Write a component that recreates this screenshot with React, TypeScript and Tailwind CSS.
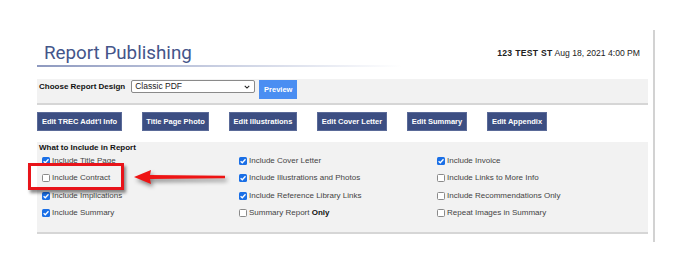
import type { ReactNode } from 'react'

type Option = { label: ReactNode; checked: boolean }

const columns: Option[][] = [
  [
    { label: 'Include Title Page', checked: true },
    { label: 'Include Contract', checked: false },
    { label: 'Include Implications', checked: true },
    { label: 'Include Summary', checked: true },
  ],
  [
    { label: 'Include Cover Letter', checked: true },
    { label: 'Include Illustrations and Photos', checked: true },
    { label: 'Include Reference Library Links', checked: true },
    {
      label: (
        <>
          Summary Report <span className="font-bold text-[#111]">Only</span>
        </>
      ),
      checked: false,
    },
  ],
  [
    { label: 'Include Invoice', checked: true },
    { label: 'Include Links to More Info', checked: false },
    { label: 'Include Recommendations Only', checked: false },
    { label: 'Repeat Images in Summary', checked: false },
  ],
]

const editButtons = [
  { label: "Edit TREC Addt'l Info", width: 'w-[85px]' },
  { label: 'Title Page Photo', width: 'w-[67px]' },
  { label: 'Edit Illustrations', width: 'w-[68px]' },
  { label: 'Edit Cover Letter', width: 'w-[70px]' },
  { label: 'Edit Summary', width: 'w-[60px]' },
  { label: 'Edit Appendix', width: 'w-[60px]' },
]

function Checkbox({ checked }: { checked: boolean }) {
  if (checked) {
    return (
      <span className="flex h-[8px] w-[8px] shrink-0 items-center justify-center rounded-[1.5px] bg-[#1a6fe6]">
        <svg viewBox="0 0 8 8" className="h-[8px] w-[8px]">
          <path d="M1.6 4.2 L3.3 5.8 L6.5 2.2" fill="none" stroke="#fff" strokeWidth="1.3" />
        </svg>
      </span>
    )
  }
  return <span className="h-[8px] w-[8px] shrink-0 rounded-[1.5px] border border-[#8a8a8a] bg-white" />
}

export default function App() {
  return (
    <div className="relative h-[271px] w-[685px] overflow-hidden bg-white font-['Liberation_Sans',Arial,sans-serif] text-[#333]">
      <div className="ml-[37px] mt-[30px] w-[618px] border-r-2 border-[#d2d2d2] pb-[8px] pr-[5px]">
        {/* Header */}
        <div className="flex items-start justify-between pt-[11px]">
          <div>
            <h1 className="pl-[7px] font-['Roboto',sans-serif] text-[18.8px] leading-[24px] text-[#44558a]">
              Report Publishing
            </h1>
            <div className="h-[2px] w-[365px] bg-gradient-to-r from-[#8e99bf] via-[#c9cfe2] to-white" />
          </div>
          <div className="pr-[8px] pt-[6px] text-[8.6px] leading-[12px] text-[#222]">
            <span className="font-bold tracking-[0.3px]">123 TEST ST</span> Aug 18, 2021 4:00 PM
          </div>
        </div>

        {/* Design chooser */}
        <div className="mt-[12px] flex h-[26px] items-start border-b-2 border-[#d6d6d6] bg-[#f2f2f2] pl-[2px] pt-[1px]">
          <span className="mt-[1px] text-[8px] font-bold leading-[12px] text-[#111]">Choose Report Design</span>
          <div className="ml-[6px] flex h-[13px] w-[124px] items-center justify-between rounded-[2px] border border-[#8a8a8a] bg-white pl-[3px] pr-[4px]">
            <span className="text-[8.5px] leading-none text-[#222]">Classic PDF</span>
            <svg viewBox="0 0 8 5" className="h-[4px] w-[6px]">
              <path d="M1 1 L4 4 L7 1" fill="none" stroke="#222" strokeWidth="1.4" />
            </svg>
          </div>
          <button className="ml-[4px] h-[19px] w-[38px] bg-[#4a8ef2] text-[7.5px] font-bold text-white">
            Preview
          </button>
        </div>

        {/* Edit buttons */}
        <div className="mt-[7px] flex gap-[20px]">
          {editButtons.map((b) => (
            <button
              key={b.label}
              className={`${b.width} h-[19px] border border-[#5a6a98] bg-[#3c4e82] text-[7.5px] font-bold text-white`}
            >
              {b.label}
            </button>
          ))}
        </div>

        {/* What to include */}
        <div className="mt-[11px] w-[611px] border-b-2 border-[#d6d6d6] bg-[#f2f2f2] pb-[10px] pt-[1px]">
          <div className="pl-[2px] text-[8px] font-bold leading-[9px] text-[#111]">What to Include in Report</div>
          <div className="grid grid-cols-[197px_198px_1fr] pl-[5px]">
            {columns.map((col, ci) => (
              <div key={ci} className="flex flex-col">
                {col.map((opt, oi) => (
                  <div key={oi} className="flex h-[17.5px] items-center gap-[2px]">
                    <Checkbox checked={opt.checked} />
                    <span className="text-[8px] leading-none text-[#444]">{opt.label}</span>
                  </div>
                ))}
              </div>
            ))}
          </div>
        </div>
      </div>

      {/* Highlight box */}
      <div className="absolute left-[28px] top-[163px] h-[27px] w-[96px] border-[3px] border-[#e8141a] shadow-[2px_3px_3px_rgba(0,0,0,0.45)]" />

      {/* Arrow */}
      <svg
        viewBox="0 0 104 26"
        className="absolute left-[128px] top-[164px] h-[26px] w-[104px] drop-shadow-[2px_3px_2px_rgba(0,0,0,0.45)]"
      >
        <path d="M6 13 L23 6 L22 11 L97 11.8 L97 14.2 L22 15 L23 20 Z" fill="#ee1414" />
      </svg>
    </div>
  )
}
